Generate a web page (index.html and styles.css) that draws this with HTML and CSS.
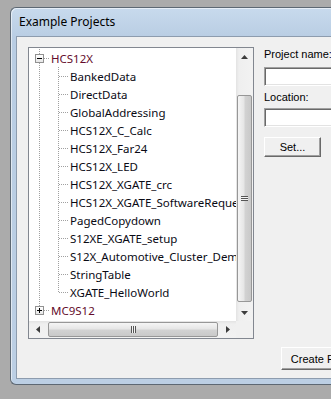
FILE: index.html
```html
<!DOCTYPE html>
<html lang="en">
<head>
  <meta charset="UTF-8" />
  <meta name="viewport" content="width=device-width, initial-scale=1" />
  <title>Example Projects</title>
  <link rel="stylesheet" href="styles.css">
</head>
<body>

  <div class="window">
    <div class="titlebar">Example Projects</div>

    <div class="client">
      <div class="main">

        <div class="tree">
          <div class="tree-top">
            <div class="tree-rows">
              <div class="row">
                <span class="cell c1 root-line root-h"><span class="exp"></span></span>
                <span class="label root-label">HCS12X</span>
              </div>
              <div class="row"><span class="cell c1 root-line"></span><span class="cell c2 tee"></span><span class="label">BankedData</span></div>
              <div class="row"><span class="cell c1 root-line"></span><span class="cell c2 tee"></span><span class="label">DirectData</span></div>
              <div class="row"><span class="cell c1 root-line"></span><span class="cell c2 tee"></span><span class="label">GlobalAddressing</span></div>
              <div class="row"><span class="cell c1 root-line"></span><span class="cell c2 tee"></span><span class="label">HCS12X_C_Calc</span></div>
              <div class="row"><span class="cell c1 root-line"></span><span class="cell c2 tee"></span><span class="label">HCS12X_Far24</span></div>
              <div class="row"><span class="cell c1 root-line"></span><span class="cell c2 tee"></span><span class="label">HCS12X_LED</span></div>
              <div class="row"><span class="cell c1 root-line"></span><span class="cell c2 tee"></span><span class="label">HCS12X_XGATE_crc</span></div>
              <div class="row"><span class="cell c1 root-line"></span><span class="cell c2 tee"></span><span class="label">HCS12X_XGATE_SoftwareRequest</span></div>
              <div class="row"><span class="cell c1 root-line"></span><span class="cell c2 tee"></span><span class="label">PagedCopydown</span></div>
              <div class="row"><span class="cell c1 root-line"></span><span class="cell c2 tee"></span><span class="label">S12XE_XGATE_setup</span></div>
              <div class="row"><span class="cell c1 root-line"></span><span class="cell c2 tee"></span><span class="label">S12X_Automotive_Cluster_Demo</span></div>
              <div class="row"><span class="cell c1 root-line"></span><span class="cell c2 tee"></span><span class="label">StringTable</span></div>
              <div class="row"><span class="cell c1 root-line"></span><span class="cell c2 elbow"></span><span class="label">XGATE_HelloWorld</span></div>
              <div class="row">
                <span class="cell c1 root-end root-h"><span class="exp plus"></span></span>
                <span class="label root-label">MC9S12</span>
              </div>
            </div>

            <div class="vscroll">
              <div class="sb-btn">
                <svg width="7" height="4" viewBox="0 0 7 4"><polygon points="3.5,0 7,4 0,4" fill="#3c3c3c"/></svg>
              </div>
              <div class="vtrack">
                <div class="vthumb"><span class="grip-v"></span></div>
              </div>
              <div class="sb-btn">
                <svg width="7" height="4" viewBox="0 0 7 4"><polygon points="0,0 7,0 3.5,4" fill="#3c3c3c"/></svg>
              </div>
            </div>
          </div>

          <div class="tree-bottom">
            <div class="hscroll">
              <div class="sb-btn">
                <svg width="4" height="7" viewBox="0 0 4 7"><polygon points="0,3.5 4,0 4,7" fill="#3c3c3c"/></svg>
              </div>
              <div class="htrack">
                <div class="hthumb"><span class="grip-h"></span></div>
              </div>
              <div class="sb-btn">
                <svg width="4" height="7" viewBox="0 0 4 7"><polygon points="0,0 4,3.5 0,7" fill="#3c3c3c"/></svg>
              </div>
            </div>
            <div class="corner"></div>
          </div>
        </div>

        <div class="panel">
          <label class="field-label">Project name:</label>
          <input class="field" type="text" />
          <label class="field-label">Location:</label>
          <input class="field" type="text" />
          <button class="btn set-btn">Set...</button>
        </div>

      </div>

      <div class="footer">
        <button class="btn create-btn">Create Project</button>
      </div>
    </div>
  </div>

</body>
</html>
```

FILE: styles.css
```css
body {
  margin: 0;
  padding: 7px 0 0 10px;
  background-color: #ababab;
  overflow: hidden;
  height: 399px;
  box-sizing: border-box;
}

.window {
  width: 360px;
  height: 378px;
  box-sizing: border-box;
  border: 1px solid #5d6873;
  border-right: none;
  border-radius: 6px 0 0 6px;
  background: linear-gradient(#c8daed, #b9cde3 30px, #bccfe4);
  box-shadow: inset 1px 1px rgba(255, 255, 255, 0.55);
  display: flex;
  flex-direction: column;
}

.titlebar {
  height: 28px;
  flex: none;
  padding-left: 8px;
  font-family: "Noto Sans", sans-serif;
  font-size: 12px;
  line-height: 28px;
  color: #000;
}

.client {
  margin-left: 5px;
  height: 343px;
  box-sizing: border-box;
  border: 1px solid #8d9cae;
  border-right: none;
  background-color: #f0f0f0;
  display: flex;
  flex-direction: column;
}

.main {
  display: flex;
  padding: 10px 0 0 11px;
}

/* tree view */

.tree {
  width: 226px;
  height: 292px;
  box-sizing: border-box;
  border: 1px solid #828790;
  background: #fff;
  display: flex;
  flex-direction: column;
  flex: none;
}

.tree-top {
  display: flex;
  height: 273px;
}

.tree-rows {
  width: 207px;
  padding-top: 1px;
  overflow: hidden;
}

.row {
  display: flex;
  align-items: center;
  height: 18px;
  white-space: nowrap;
}

.cell {
  flex: none;
  height: 18px;
  display: flex;
  align-items: center;
}

.c1 {
  width: 20px;
}

.c2 {
  width: 19px;
}

.root-line {
  background: repeating-linear-gradient(#a0a0a0 0 1px, transparent 1px 2px) 10px 0 / 1px 18px no-repeat;
}

.root-end {
  background: repeating-linear-gradient(#a0a0a0 0 1px, transparent 1px 2px) 10px 0 / 1px 9px no-repeat;
}

.root-h {
  background:
    repeating-linear-gradient(to right, #a0a0a0 0 1px, transparent 1px 2px) 15px 9px / 5px 1px no-repeat,
    repeating-linear-gradient(#a0a0a0 0 1px, transparent 1px 2px) 10px 0 / 1px 18px no-repeat;
}

.root-end.root-h {
  background:
    repeating-linear-gradient(to right, #a0a0a0 0 1px, transparent 1px 2px) 15px 9px / 5px 1px no-repeat,
    repeating-linear-gradient(#a0a0a0 0 1px, transparent 1px 2px) 10px 0 / 1px 9px no-repeat;
}

.tee {
  background:
    repeating-linear-gradient(to right, #a0a0a0 0 1px, transparent 1px 2px) 10px 9px / 9px 1px no-repeat,
    repeating-linear-gradient(#a0a0a0 0 1px, transparent 1px 2px) 9px 0 / 1px 18px no-repeat;
}

.elbow {
  background:
    repeating-linear-gradient(to right, #a0a0a0 0 1px, transparent 1px 2px) 10px 9px / 9px 1px no-repeat,
    repeating-linear-gradient(#a0a0a0 0 1px, transparent 1px 2px) 9px 0 / 1px 9px no-repeat;
}

.exp {
  width: 7px;
  height: 7px;
  margin: 1px 0 0 6px;
  border: 1px solid #919191;
  background:
    linear-gradient(#000, #000) center / 5px 1px no-repeat,
    linear-gradient(#fff, #e6e6e6);
}

.exp.plus {
  background:
    linear-gradient(#000, #000) center / 5px 1px no-repeat,
    linear-gradient(#000, #000) center / 1px 5px no-repeat,
    linear-gradient(#fff, #e6e6e6);
}

.label {
  padding-left: 2px;
  font-family: "Noto Sans", sans-serif;
  font-size: 11.5px;
  color: #0a0a14;
}

.root-label {
  color: #640c2c;
}

/* scrollbars */

.vscroll {
  width: 17px;
  display: flex;
  flex-direction: column;
  background: linear-gradient(to right, #e3e3e3, #efefef 3px, #f2f2f2);
}

.sb-btn {
  flex: none;
  width: 17px;
  height: 17px;
  display: flex;
  align-items: center;
  justify-content: center;
}

.vtrack {
  flex: 1;
  padding: 30px 1px 2px 1px;
  display: flex;
}

.vthumb {
  flex: 1;
  border: 1px solid #979797;
  border-radius: 2px;
  background: linear-gradient(to right, #f5f5f5, #e6e6e6 45%, #d2d2d2 55%, #c9c9c9);
  display: flex;
  align-items: center;
  justify-content: center;
}

.grip-v {
  width: 7px;
  height: 5px;
  background: repeating-linear-gradient(#555 0 1px, #f4f4f4 1px 2px);
}

.tree-bottom {
  display: flex;
  height: 17px;
}

.hscroll {
  width: 207px;
  display: flex;
  background: linear-gradient(#e3e3e3, #efefef 3px, #f2f2f2);
}

.htrack {
  flex: 1;
  padding: 1px 1px 1px 2px;
  display: flex;
}

.hthumb {
  flex: 1;
  border: 1px solid #979797;
  border-radius: 2px;
  background: linear-gradient(#f5f5f5, #e6e6e6 45%, #d2d2d2 55%, #c9c9c9);
  display: flex;
  align-items: center;
  justify-content: center;
}

.grip-h {
  width: 5px;
  height: 7px;
  background: repeating-linear-gradient(to right, #555 0 1px, #f4f4f4 1px 2px);
}

.corner {
  width: 17px;
  background: #f0f0f0;
}

/* right panel */

.panel {
  margin-left: 10px;
  width: 110px;
  display: flex;
  flex-direction: column;
  align-items: flex-start;
}

.field-label {
  font-family: "Liberation Sans", sans-serif;
  font-size: 11px;
  line-height: 14px;
  color: #000;
  margin-bottom: 6px;
}

.field-label + .field + .field-label {
  margin-top: 4px;
  margin-bottom: 4px;
}

.field {
  width: 110px;
  height: 19px;
  box-sizing: border-box;
  margin: 0;
  padding: 0;
  border: 1px solid;
  border-color: #a0a0a0 #fff #fff #a0a0a0;
  box-shadow: inset 1px 1px #696969, inset -1px -1px #e3e3e3;
  background: #fff;
}

.btn {
  box-sizing: border-box;
  padding: 0;
  margin: 0;
  font-family: "Liberation Sans", sans-serif;
  font-size: 11px;
  color: #000;
  background: #f0f0f0;
  border: 1px solid;
  border-color: #fff #696969 #696969 #fff;
  box-shadow: inset -1px -1px #a0a0a0;
}

.set-btn {
  margin-top: 10px;
  width: 57px;
  height: 20px;
}

.footer {
  padding: 8px 0 0 264px;
}

.create-btn {
  width: 90px;
  height: 23px;
}
```
